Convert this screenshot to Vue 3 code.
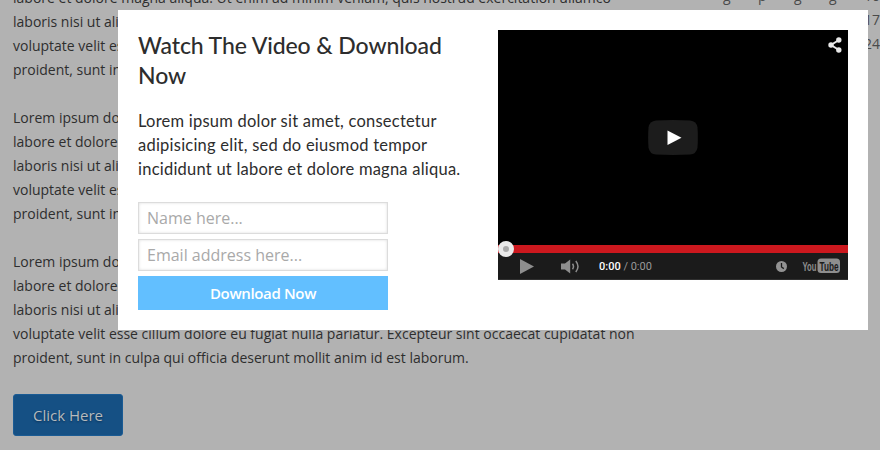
<script setup>
const paragraphs = [
  [
    'labore et dolore magna aliqua. Ut enim ad minim veniam, quis nostrud exercitation ullamco',
    'laboris nisi ut aliquip ex ea commodo consequat. Duis aute irure dolor in reprehenderit in',
    'voluptate velit esse cillum dolore eu fugiat nulla pariatur. Excepteur sint occaecat cupidatat non',
    'proident, sunt in culpa qui officia deserunt mollit anim id est laborum.',
  ],
  [
    'Lorem ipsum dolor sit amet, consectetur adipisicing elit, sed do eiusmod tempor incididunt ut',
    'labore et dolore magna aliqua. Ut enim ad minim veniam, quis nostrud exercitation ullamco',
    'laboris nisi ut aliquip ex ea commodo consequat. Duis aute irure dolor in reprehenderit in',
    'voluptate velit esse cillum dolore eu fugiat nulla pariatur. Excepteur sint occaecat cupidatat non',
    'proident, sunt in culpa qui officia deserunt mollit anim id est laborum.',
  ],
  [
    'Lorem ipsum dolor sit amet, consectetur adipisicing elit, sed do eiusmod tempor incididunt ut',
    'labore et dolore magna aliqua. Ut enim ad minim veniam, quis nostrud exercitation ullamco',
    'laboris nisi ut aliquip ex ea commodo consequat. Duis aute irure dolor in reprehenderit in',
    'voluptate velit esse cillum dolore eu fugiat nulla pariatur. Excepteur sint occaecat cupidatat non',
    'proident, sunt in culpa qui officia deserunt mollit anim id est laborum.',
  ],
]
</script>

<template>
  <div class="page">
    <main class="article">
      <p v-for="(lines, i) in paragraphs" :key="i">
        <span v-for="(line, j) in lines" :key="j" class="line">{{ line }}</span>
      </p>
      <button class="cta">Click Here</button>
    </main>
    <aside class="sidebar">
      <span>g</span><span>p</span><span>g</span><span>g</span><span>10</span>
      <span class="day">17</span>
      <span class="day">24</span>
    </aside>

    <section class="modal">
      <div class="copy">
        <h2>
          <span class="line">Watch The Video &amp; Download</span>
          <span class="line">Now</span>
        </h2>
        <p class="lead">
          <span class="line">Lorem ipsum dolor sit amet, consectetur</span>
          <span class="line">adipisicing elit, sed do eiusmod tempor</span>
          <span class="line">incididunt ut labore et dolore magna aliqua.</span>
        </p>
        <form class="form">
          <input type="text" placeholder="Name here..." />
          <input type="text" placeholder="Email address here..." />
          <button type="button" class="download">Download Now</button>
        </form>
      </div>
      <div class="video">
        <div class="screen">
          <svg class="share" width="14" height="16" viewBox="0 0 14 16">
            <path d="M11 3 3 8l8 5" fill="none" stroke="#e8e8e8" stroke-width="2" />
            <circle cx="10.8" cy="3" r="2.7" fill="#e8e8e8" />
            <circle cx="3" cy="8" r="2.7" fill="#e8e8e8" />
            <circle cx="10.8" cy="13" r="2.7" fill="#e8e8e8" />
          </svg>
          <svg class="big-play" width="50" height="35" viewBox="0 0 50 35">
            <path d="M8 .5Q25-.3 42 .5Q48.500 1 49.500 7.500Q50.200 17.500 49.500 27.500Q48.500 34 42 34.500Q25 35.300 8 34.500Q1.500 34 .5 27.500Q-.2 17.500 .5 7.500Q1.500 1 8 .5Z" fill="#1c1c1c" />
            <path d="M19.500 10.500v14.500l14-7.200z" fill="#fff" />
          </svg>
        </div>
        <div class="progress"><span class="knob"></span></div>
        <div class="controls">
          <svg class="play" width="14" height="15" viewBox="0 0 14 15"><path d="M0 0v15l14-7.500z" fill="#8e8e8e" /></svg>
          <svg class="volume" width="19" height="15" viewBox="0 0 19 15">
            <path d="M0 4.500h4L9.200.5v14L4 10.500H0z" fill="#8e8e8e" />
            <path d="M11.500 4.800q2 2.700 0 5.400M14.800 2q4.400 5.500 0 11" fill="none" stroke="#8e8e8e" stroke-width="1.500" />
          </svg>
          <span class="time"><b>0:00</b> / 0:00</span>
          <svg class="clock" width="11" height="11" viewBox="0 0 11 11">
            <circle cx="5.500" cy="5.500" r="5.500" fill="#929292" />
            <path d="M5.500 2v4l2.300 1.600" fill="none" stroke="#1b1b1b" stroke-width="1.300" />
          </svg>
          <svg class="youtube" width="39" height="16" viewBox="0 0 39 16">
            <rect x="15.500" y=".5" width="22.500" height="14.500" rx="3.500" fill="#8e8e8e" />
            <text x=".5" y="12.500" textLength="14" lengthAdjust="spacingAndGlyphs" class="yt you">You</text>
            <text x="17.500" y="12.500" textLength="19" lengthAdjust="spacingAndGlyphs" class="yt tube">Tube</text>
          </svg>
        </div>
      </div>
    </section>
  </div>
</template>

<style>
body { margin: 0; overflow: hidden; }
</style>

<style scoped>
* { box-sizing: border-box; }
.page {
  position: relative;
  width: 880px;
  height: 450px;
  overflow: hidden;
  display: flex;
  justify-content: space-between;
  background: #b2b2b2;
  color: #2e2e2e;
  font-family: "Open Sans", sans-serif;
  font-size: 14px;
  line-height: 24px;
}
.line { display: block; width: max-content; white-space: nowrap; }
.article { margin: -14px 0 0 13px; width: 640px; }
.article p { margin: 0 0 24px; }
.cta {
  display: block;
  width: 110px;
  height: 42px;
  padding: 0;
  border: 1px solid #1a5b94;
  border-radius: 3px;
  background: #155084;
  color: #b6babd;
  font: 15px "Open Sans", sans-serif;
  text-shadow: 0 1px 2px #0a3157;
}
.sidebar {
  width: 157px;
  height: 72px;
  margin-top: -16px;
  display: flex;
  flex-wrap: wrap;
  justify-content: space-between;
  color: #4a4a4a;
  text-align: right;
}
.sidebar .day { width: 100%; height: 24px; }
.modal {
  position: absolute;
  left: 118px;
  top: 10px;
  width: 750px;
  height: 320px;
  padding: 20px;
  display: flex;
  justify-content: space-between;
  background: #fff;
}
.copy { width: 340px; color: #2d2d2d; }
h2 { margin: 0; font: 500 23px/30px Lato, sans-serif; letter-spacing: -0.1px; }
.lead { margin: 19px 0 21px; font: 16.5px/24px Lato, sans-serif; letter-spacing: 0.23px; }
.form { display: flex; flex-direction: column; gap: 5px; width: 250px; }
.form input {
  height: 32px;
  padding: 0 8px;
  border: 1px solid #dcdcdc;
  box-shadow: inset 0 0 3px #ddd;
  font: 16px "Open Sans", sans-serif;
}
.form input::placeholder { color: #a9a9a9; opacity: 1; }
.download {
  height: 34px;
  padding: 0;
  border: 0;
  background: #62bfff;
  color: #fff;
  font: 600 15px "Open Sans", sans-serif;
  letter-spacing: -0.35px;
}
.video { width: 350px; height: 250px; background: #000; }
.screen { position: relative; height: 215px; }
.share { position: absolute; right: 6px; top: 7px; }
.big-play { position: absolute; left: 150px; top: 90px; }
.progress { position: relative; height: 8px; background: #cc181e; }
.knob { position: absolute; left: 0; top: -4px; width: 16px; height: 16px; border: 5px solid #eaeaea; border-radius: 50%; background: #aaa; }
.controls { height: 27px; display: flex; align-items: center; background: #1b1b1b; border-bottom: 1px solid #303030; padding: 0 7px 0 22px; }
.play { margin-right: 27px; }
.volume { margin-right: 19px; }
.time { color: #999; font: 11px Roboto, sans-serif; white-space: pre; }
.time b { color: #fff; font-weight: 500; }
.clock { margin-left: auto; margin-right: 15px; }
.yt { font: bold 13.5px "Liberation Sans", sans-serif; }
.you { fill: #8e8e8e; }
.tube { fill: #1b1b1b; }
</style>
